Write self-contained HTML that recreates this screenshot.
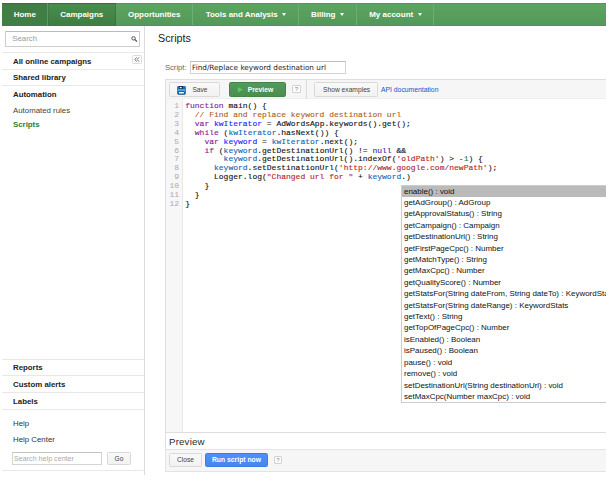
<!DOCTYPE html>
<html><head><meta charset="utf-8"><title>Scripts</title>
<style>
*{box-sizing:border-box;margin:0;padding:0}
html,body{width:606px;height:486px;background:#fff;overflow:hidden}
body{position:relative;font-family:"Liberation Sans",sans-serif;color:#222}
.a{position:absolute;white-space:nowrap}
.t{position:absolute;white-space:nowrap;line-height:12px;height:12px}
.b{font-weight:bold}
.hl{position:absolute;height:1px;background:#e8e8e8}
.vl{position:absolute;width:1px;background:#dcdcdc}
/* nav */
#nav{left:2px;top:3px;width:604px;height:23px;background:linear-gradient(#5ca560,#54985a);border-top:1px solid #519956;border-bottom:1px solid #4f9454}
.nt{position:absolute;top:0;height:21px;line-height:21px;color:#fff;font-weight:bold;font-size:8px;text-align:left;white-space:nowrap}
.sep{position:absolute;top:0;width:1px;height:21px;background:#6fad73}
.car{display:inline-block;width:0;height:0;border-left:2.6px solid transparent;border-right:2.6px solid transparent;border-top:3px solid #fff;vertical-align:middle;margin-left:4.3px;margin-top:-0.5px}
.btn{position:absolute;border:1px solid #d9d9d9;border-radius:1.5px;background:linear-gradient(#f9f9f9,#f2f2f2);font-size:6.65px;color:#444;text-align:center;white-space:nowrap}
pre{font-family:"Liberation Mono",monospace;font-size:8px;line-height:8.835px;position:absolute;white-space:pre;color:#111;-webkit-text-stroke:0.12px currentColor}
.k{color:#812092}.c{color:#b0601a}.d{color:#1a1aff}.v{color:#1464b4}.s{color:#b02626}.at{color:#3a2aa8}.n{color:#2a7a58}
#ac{left:400.5px;top:184.6px;width:230px;height:218.8px;border:1px solid #cdcdcd;background:#fff;font-size:7.97px;color:#111}
#ac div{height:11.41px;line-height:11.41px;padding-left:2.5px;white-space:nowrap}
.q{position:absolute;border:1px solid #d2d2d2;border-radius:1px;background:#fcfcfc;color:#888;text-align:center}
</style></head><body>

<!-- top nav -->
<div id="nav" class="a">
  <div class="a" style="left:0;top:-1px;width:45px;height:23px;background:#417e45;border-top:1px solid #35703a"></div>
  <div class="a" style="left:46px;top:-1px;width:68px;height:23px;background:linear-gradient(#4a8d4e,#3f7d43);border-top:1px solid #35703a;box-shadow:inset 1px 0 1px rgba(0,0,0,.08),inset -1px 0 1px rgba(0,0,0,.1)"></div>
  <div class="nt" style="left:11.7px">Home</div>
  <div class="sep" style="left:45px;background:#5a9a5e;top:-1px;height:23px"></div>
  <div class="nt" style="left:58.2px">Campaigns</div>
  <div class="nt" style="left:126px">Opportunities</div>
  <div class="sep" style="left:190px"></div>
  <div class="nt" style="left:203.7px">Tools and Analysis<span class="car"></span></div>
  <div class="sep" style="left:296px"></div>
  <div class="nt" style="left:309px">Billing<span class="car"></span></div>
  <div class="sep" style="left:354px"></div>
  <div class="nt" style="left:367.2px">My account<span class="car"></span></div>
  <div class="sep" style="left:431px"></div>
</div>

<!-- sidebar -->
<div class="vl" style="left:144px;top:26px;height:449px"></div>
<div class="a" style="left:5px;top:31px;width:135px;height:16px;border:1px solid #cdcdcd;border-top-color:#bbb;border-radius:1px"></div>
<div class="t" style="left:12.3px;top:33.3px;font-size:7.8px;color:#9a9a9a">Search</div>
<svg class="a" style="left:131px;top:36px" width="7" height="6" viewBox="0 0 7 6"><circle cx="2.5" cy="2.3" r="1.7" fill="none" stroke="#555" stroke-width="1"/><path d="M3.8 3.5L6 5.4" stroke="#555" stroke-width="1.3"/></svg>
<div class="hl" style="left:2px;top:52px;width:142px"></div>
<div class="t b" style="left:13px;top:55.7px;font-size:7.85px">All online campaigns</div>
<div class="a" style="left:132px;top:55px;width:9.5px;height:9px;border:1px solid #dcdcdc;border-radius:1.5px;background:#fdfdfd"></div>
<svg class="a" style="left:134px;top:57px" width="6" height="5" viewBox="0 0 6 5"><path d="M2.6 0.4L0.8 2.5L2.6 4.6M5 0.4L3.2 2.5L5 4.6" fill="none" stroke="#555" stroke-width="0.8"/></svg>
<div class="hl" style="left:2px;top:69px;width:142px"></div>
<div class="t b" style="left:13px;top:72px;font-size:7.85px">Shared library</div>
<div class="hl" style="left:2px;top:85px;width:142px"></div>
<div class="t b" style="left:13px;top:89px;font-size:7.85px">Automation</div>
<div class="t" style="left:13px;top:104.5px;font-size:7.85px;color:#444">Automated rules</div>
<div class="t b" style="left:13px;top:119px;font-size:7.85px;color:#2f7d32">Scripts</div>

<div class="hl" style="left:2px;top:359px;width:142px"></div>
<div class="t b" style="left:13px;top:362px;font-size:7.85px">Reports</div>
<div class="hl" style="left:2px;top:375px;width:142px"></div>
<div class="t b" style="left:13px;top:378.6px;font-size:7.85px">Custom alerts</div>
<div class="hl" style="left:2px;top:392px;width:142px"></div>
<div class="t b" style="left:13px;top:395.5px;font-size:7.85px">Labels</div>
<div class="hl" style="left:2px;top:409px;width:142px"></div>
<div class="t" style="left:13px;top:418px;font-size:7.85px;color:#333">Help</div>
<div class="t" style="left:13px;top:434px;font-size:7.85px;color:#333">Help Center</div>
<div class="a" style="left:11.5px;top:452px;width:90.5px;height:13px;border:1px solid #d4d4d4;border-top-color:#c4c4c4"></div>
<div class="t" style="left:14px;top:453px;font-size:7.15px;color:#aaa">Search help center</div>
<div class="btn" style="left:107px;top:452px;width:24px;height:13px;line-height:11px">Go</div>
<div class="hl" style="left:2px;top:470px;width:142px"></div>

<!-- main -->
<div class="t" style="left:158px;top:29.6px;font-size:10.75px;line-height:16px;height:16px;color:#222">Scripts</div>
<div class="t" style="left:165px;top:62px;font-size:7.6px;color:#666">Script:</div>
<div class="a" style="left:190px;top:61px;width:156px;height:13px;border:1px solid #d2d2d2;border-top-color:#bdbdbd"></div>
<div class="t" style="left:192px;top:62px;font-size:7.27px;font-family:'DejaVu Sans',sans-serif;color:#222">Find/Replace keyword destination url</div>

<!-- editor panel -->
<div class="a" style="left:165px;top:79px;width:450px;height:354px;border:1px solid #dedede;background:#fff"></div>
<div class="a" style="left:166px;top:80px;width:440px;height:19px;background:#f6f6f6;border-bottom:1px solid #efefef"></div>
<div class="a" style="left:166px;top:99px;width:17px;height:333px;background:#f7f7f7;border-right:1px solid #e9e9e9"></div>
<div class="btn" style="left:169px;top:82px;width:51px;height:15px;line-height:13px"><span style="margin-left:11px">Save</span></div>
<svg class="a" style="left:177px;top:85.6px" width="9" height="9" viewBox="0 0 9 9"><rect x="0.4" y="0.3" width="8.2" height="8.1" rx="1.1" fill="#1f6db3" stroke="#123f6e" stroke-width="0.5"/><rect x="0.8" y="3" width="7.4" height="2.3" fill="#46a4ec"/><rect x="2.1" y="0.3" width="3.6" height="2.5" fill="#0a0f18"/><rect x="2.7" y="1" width="2" height="1.3" fill="#fff"/><rect x="1.8" y="5.7" width="5.3" height="2.4" fill="#0a0f18"/><rect x="2" y="6" width="4.9" height="1.6" fill="#fff"/></svg>
<div class="a" style="left:229px;top:82px;width:57px;height:15px;border:1px solid #44844a;border-radius:1.5px;background:linear-gradient(#549a59,#4b8e50);color:#fff;font-weight:bold;font-size:6.75px;line-height:13px;text-align:left"><span style="margin-left:17.7px">Preview</span></div>
<svg class="a" style="left:237px;top:86px" width="7" height="7" viewBox="0 0 7 7"><path d="M0.9 1.1L5.9 3.7L0.9 6.3Z" fill="#4fd354"/></svg>
<div class="q" style="left:292px;top:85px;width:9px;height:8px;font-size:6px;line-height:6px">?</div>
<div class="vl" style="left:306px;top:80px;height:19px;background:#dcdcdc"></div>
<div class="btn" style="left:314px;top:82px;width:63.5px;height:15px;line-height:13px;font-size:6.7px;text-align:left;padding-left:8px">Show examples</div>
<div class="t" style="left:381px;top:83.5px;font-size:6.8px;color:#15c">API documentation</div>

<pre style="left:166px;top:102.4px;width:13px;text-align:right;color:#aaa;-webkit-text-stroke:0">1
2
3
4
5
6
7
8
9
10
11
12</pre>
<pre style="left:185.2px;top:102.4px"><span class="k">function</span> main() {
  <span class="c">// Find and replace keyword destination url</span>
  <span class="k">var</span> <span class="d">kwIterator</span> = AdWordsApp.keywords().get();
  <span class="k">while</span> (<span class="v">kwIterator</span>.hasNext()) {
    <span class="k">var</span> <span class="d">keyword</span> = <span class="v">kwIterator</span>.next();
    <span class="k">if</span> (<span class="v">keyword</span>.getDestinationUrl() != <span class="at">null</span> &amp;&amp;
        <span class="v">keyword</span>.getDestinationUrl().indexOf(<span class="s">'oldPath'</span>) &gt; -<span class="n">1</span>) {
      <span class="v">keyword</span>.setDestinationUrl(<span class="s">'http://www.google.com/newPath'</span>);
      Logger.log(<span class="s">"Changed url for "</span> + <span class="v">keyword</span>.)
    }
  }
}</pre>

<!-- autocomplete -->
<div id="ac" class="a">
<div style="background:#bababa">enable() : void</div>
<div>getAdGroup() : AdGroup</div>
<div>getApprovalStatus() : String</div>
<div>getCampaign() : Campaign</div>
<div>getDestinationUrl() : String</div>
<div>getFirstPageCpc() : Number</div>
<div>getMatchType() : String</div>
<div>getMaxCpc() : Number</div>
<div>getQualityScore() : Number</div>
<div>getStatsFor(String dateFrom, String dateTo) : KeywordStats</div>
<div>getStatsFor(String dateRange) : KeywordStats</div>
<div>getText() : String</div>
<div>getTopOfPageCpc() : Number</div>
<div>isEnabled() : Boolean</div>
<div>isPaused() : Boolean</div>
<div>pause() : void</div>
<div>remove() : void</div>
<div>setDestinationUrl(String destinationUrl) : void</div>
<div>setMaxCpc(Number maxCpc) : void</div>
</div>

<!-- preview panel -->
<div class="vl" style="left:165px;top:432px;height:18px;background:#dedede"></div>
<div class="t" style="left:169px;top:435.4px;font-size:9.7px;letter-spacing:0.18px;line-height:14px;height:14px;color:#2a2a2a">Preview</div>
<div class="a" style="left:165px;top:449px;width:450px;height:23px;background:#f6f6f6;border:1px solid #e4e4e4"></div>
<div class="btn" style="left:169px;top:453px;width:33px;height:14px;line-height:12px">Close</div>
<div class="a" style="left:205px;top:453px;width:63px;height:14px;border:1px solid #3b7de8;border-radius:1.5px;background:linear-gradient(#4d90fe,#4787ed);color:#fff;font-weight:bold;font-size:6.8px;line-height:12px;text-align:center">Run script now</div>
<div class="q" style="left:274px;top:456px;width:8px;height:8px;font-size:5.5px;line-height:6px">?</div>

</body></html>
